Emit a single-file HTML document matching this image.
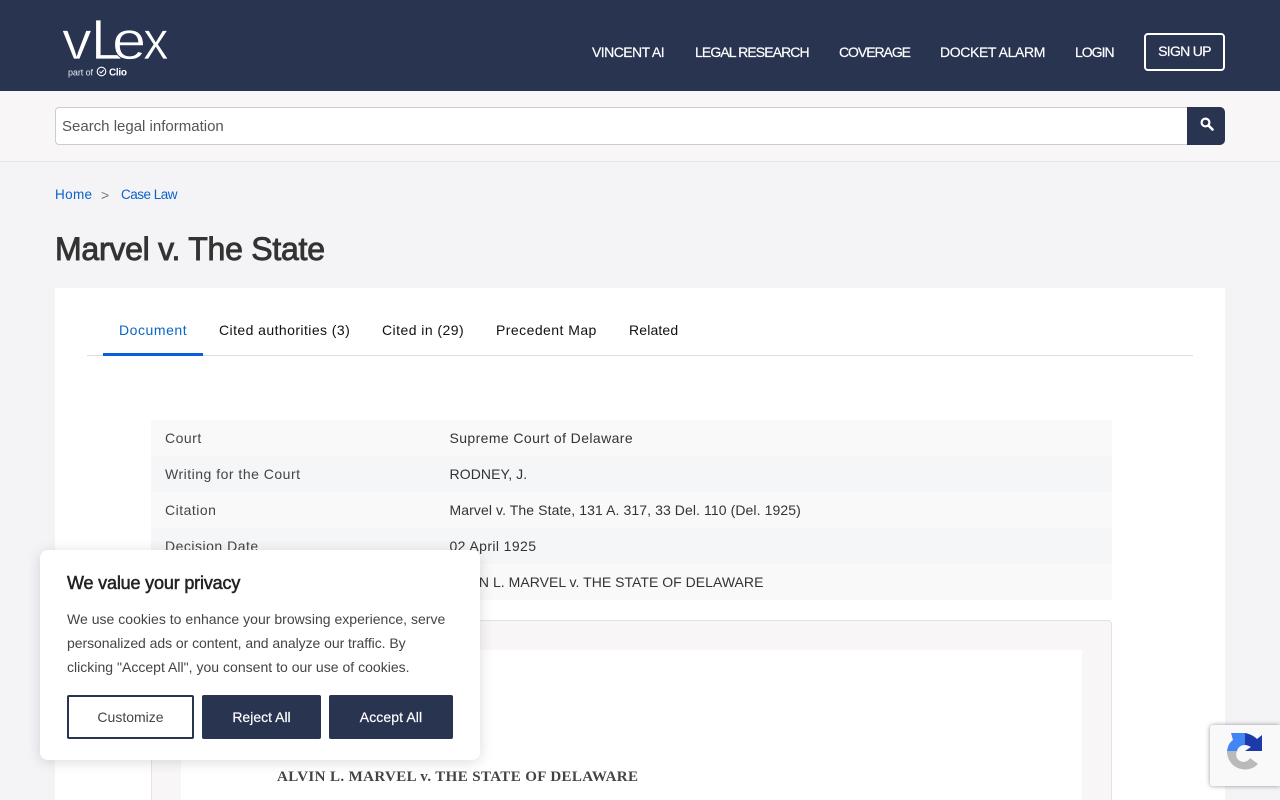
<!DOCTYPE html>
<html lang="en"><head><meta charset="utf-8"><title>Marvel v. The State</title>
<style>
*{box-sizing:border-box}
html,body{margin:0;padding:0;width:1280px;height:800px;overflow:hidden;background:#f4f4f7}
body{position:relative;font-family:"Liberation Sans",sans-serif;font-size:14px;color:#333}
.a,.t{position:absolute}
.t{white-space:nowrap;line-height:20px}
a{color:inherit;text-decoration:none}
.nav{color:#fff;top:42px;-webkit-text-stroke:.2px #fff}
.tab{top:320px;color:#111}
.r{left:151px;width:961px;height:36px}
.k{left:165px;color:#444;letter-spacing:.5px}
.v{left:449.5px;color:#333}
.btn{position:absolute;top:695px;height:44px;border-radius:2px;text-align:center;line-height:44px;font-size:14px}
.dark{background:#293451;color:#fff;-webkit-text-stroke:.2px #fff}
</style></head><body>

<div class="a" style="left:0;top:0;width:1280px;height:91px;background:#293451"></div>
<svg class="a" style="left:0;top:0" width="200" height="91" viewBox="0 0 200 91">
<g font-family="Liberation Sans" fill="#fff" stroke="#293451" stroke-width=".8">
<text transform="translate(62,59) scale(1.1,1)" font-size="54">v</text>
<text x="91" y="59" font-size="57">L</text>
<text transform="translate(112,59) scale(1.14,1)" font-size="54">e</text>
<text transform="translate(143,59) scale(.95,1)" font-size="54">x</text>
</g>
<text x="68" y="75.500" font-family="Liberation Sans" font-size="9" fill="#e8eaf0" textLength="25">part of</text>
<circle cx="101.500" cy="71.500" r="4.300" fill="none" stroke="#fff" stroke-width="1.100"/>
<path d="M99.500 71.500l1.500 1.500 2.700-3" fill="none" stroke="#fff" stroke-width="1"/>
<text x="109" y="75.500" font-family="Liberation Sans" font-size="10" font-weight="700" fill="#fff" textLength="18">Clio</text>
</svg>

<a class="t nav" href="#" style="left:592px;letter-spacing:-.55px">VINCENT AI</a>
<a class="t nav" href="#" style="left:695px;letter-spacing:-.9px">LEGAL RESEARCH</a>
<a class="t nav" href="#" style="left:839px;letter-spacing:-1.05px">COVERAGE</a>
<a class="t nav" href="#" style="left:940px;letter-spacing:-.37px">DOCKET ALARM</a>
<a class="t nav" href="#" style="left:1075px;letter-spacing:-1px">LOGIN</a>
<a class="a nav" href="#" style="left:1144px;top:33px;width:81px;height:38px;border:2px solid #fff;border-radius:4px;text-align:center;line-height:33px;letter-spacing:-.7px;white-space:nowrap">SIGN UP</a>

<div class="a" style="left:0;top:91px;width:1280px;height:71px;background:#f8f6f6;border-bottom:1px solid #e4e4e8"></div>
<div class="a" style="left:55px;top:107px;width:1133px;height:38px;background:#fff;border:1px solid #ccc;border-radius:4px 0 0 4px"></div>
<div class="t" style="left:62px;top:117px;font-size:15px;color:#555;letter-spacing:0">Search legal information</div>
<div class="a" style="left:1187px;top:107px;width:38px;height:38px;background:#293451;border-radius:0 5px 5px 0"></div>
<svg class="a" style="left:1199px;top:116px" width="16" height="16" viewBox="0 0 16 16"><circle cx="6.500" cy="6.500" r="3.900" fill="none" stroke="#fff" stroke-width="2.200"/><path d="M9.500 9.500l4 4" stroke="#fff" stroke-width="2.600" stroke-linecap="round"/></svg>

<a class="t" href="#" style="left:55px;top:185px;color:#0b62c9;font-size:13.5px;letter-spacing:.35px">Home</a>
<span class="t" style="left:101px;top:185px;color:#777">&gt;</span>
<a class="t" href="#" style="left:121px;top:185px;color:#0b62c9;font-size:13.5px;letter-spacing:-.5px">Case Law</a>
<h1 class="t" style="left:55px;top:230px;margin:0;font-size:32px;line-height:38px;font-weight:400;color:#333;letter-spacing:-.25px;-webkit-text-stroke:.9px #333">Marvel v. The State</h1>

<div class="a" style="left:55px;top:288px;width:1170px;height:512px;background:#fff"></div>
<div class="a" style="left:87px;top:355px;width:1106px;height:1px;background:#ddd"></div>
<div class="a" style="left:103px;top:353px;width:100px;height:3px;background:#0a5fd8"></div>
<a class="t tab" href="#" style="left:119px;color:#0b66c3;letter-spacing:.55px">Document</a>
<a class="t tab" href="#" style="left:219px;letter-spacing:.43px">Cited authorities (3)</a>
<a class="t tab" href="#" style="left:382px;letter-spacing:.45px">Cited in (29)</a>
<a class="t tab" href="#" style="left:496px;letter-spacing:.45px">Precedent Map</a>
<a class="t tab" href="#" style="left:629px;letter-spacing:.15px">Related</a>

<div class="a r" style="top:420px;background:#f9f9fa"></div>
<div class="a r" style="top:456px;background:#f5f6f8"></div>
<div class="a r" style="top:492px;background:#f9f9fa"></div>
<div class="a r" style="top:528px;background:#f5f6f8"></div>
<div class="a r" style="top:564px;background:#f9f9fa"></div>
<span class="t k" style="top:428px">Court</span><span class="t v" style="top:428px;letter-spacing:.4px">Supreme Court of Delaware</span>
<span class="t k" style="top:464px">Writing for the Court</span><span class="t v" style="top:464px;letter-spacing:.1px">RODNEY, J.</span>
<span class="t k" style="top:500px">Citation</span><span class="t v" style="top:500px;letter-spacing:.09px">Marvel v. The State, 131 A. 317, 33 Del. 110 (Del. 1925)</span>
<span class="t k" style="top:536px">Decision Date</span><span class="t v" style="top:536px;letter-spacing:.4px">02 April 1925</span>
<span class="t v" style="top:572px;letter-spacing:.03px">ALVIN L. MARVEL v. THE STATE OF DELAWARE</span>

<div class="a" style="left:151px;top:620px;width:961px;height:190px;background:#f8f6f6;border:1px solid #e6e2e2;border-radius:4px"></div>
<div class="a" style="left:181px;top:650px;width:901px;height:150px;background:#fff"></div>
<div class="t" style="left:277px;top:767px;font-family:'Liberation Serif',serif;font-weight:700;font-size:15px;color:#444;letter-spacing:.375px">ALVIN L. MARVEL v. THE STATE OF DELAWARE</div>

<div class="a" style="left:40px;top:550px;width:440px;height:210px;background:#fff;border-radius:8px;box-shadow:0 2px 14px rgba(0,0,0,.14)"></div>
<div class="t" style="left:67px;top:573px;font-size:18px;color:#222;letter-spacing:-.17px;-webkit-text-stroke:.5px #222">We value your privacy</div>
<div class="t" style="left:67px;top:607px;color:#444;line-height:24px;letter-spacing:.02px">We use cookies to enhance your browsing experience, serve<br><span style="letter-spacing:-.05px">personalized ads or content, and analyze our traffic. By</span><br>clicking "Accept All", you consent to our use of cookies.</div>
<div class="btn" style="left:67px;width:127px;border:2px solid #293451;background:#fff;color:#444;line-height:40px">Customize</div>
<div class="btn dark" style="left:202px;width:119px">Reject All</div>
<div class="btn dark" style="left:329px;width:124px;letter-spacing:.1px">Accept All</div>

<div class="a" style="left:1210px;top:725px;width:70px;height:61px;background:#f9f9f9;border-radius:3px 0 0 3px;box-shadow:0 0 5px rgba(0,0,0,.4)"></div>
<svg class="a" style="left:1226px;top:733px" width="38" height="40" viewBox="0 0 38 40">
<path d="M1 18A18 18 0 0 0 32 31L24 25A7 7 0 0 1 11 18Z" fill="#bababa"/>
<path d="M1 18C2 12 4 9 7 7L5 0H19V12C15 12 12 14 11 18Z" fill="#4285f4"/>
<path d="M19 0C24 1 28 3 31 6L36 2V18H19L25 14C23 13 21 12 19 12Z" fill="#1c3aa9"/>
</svg>
</body></html>
